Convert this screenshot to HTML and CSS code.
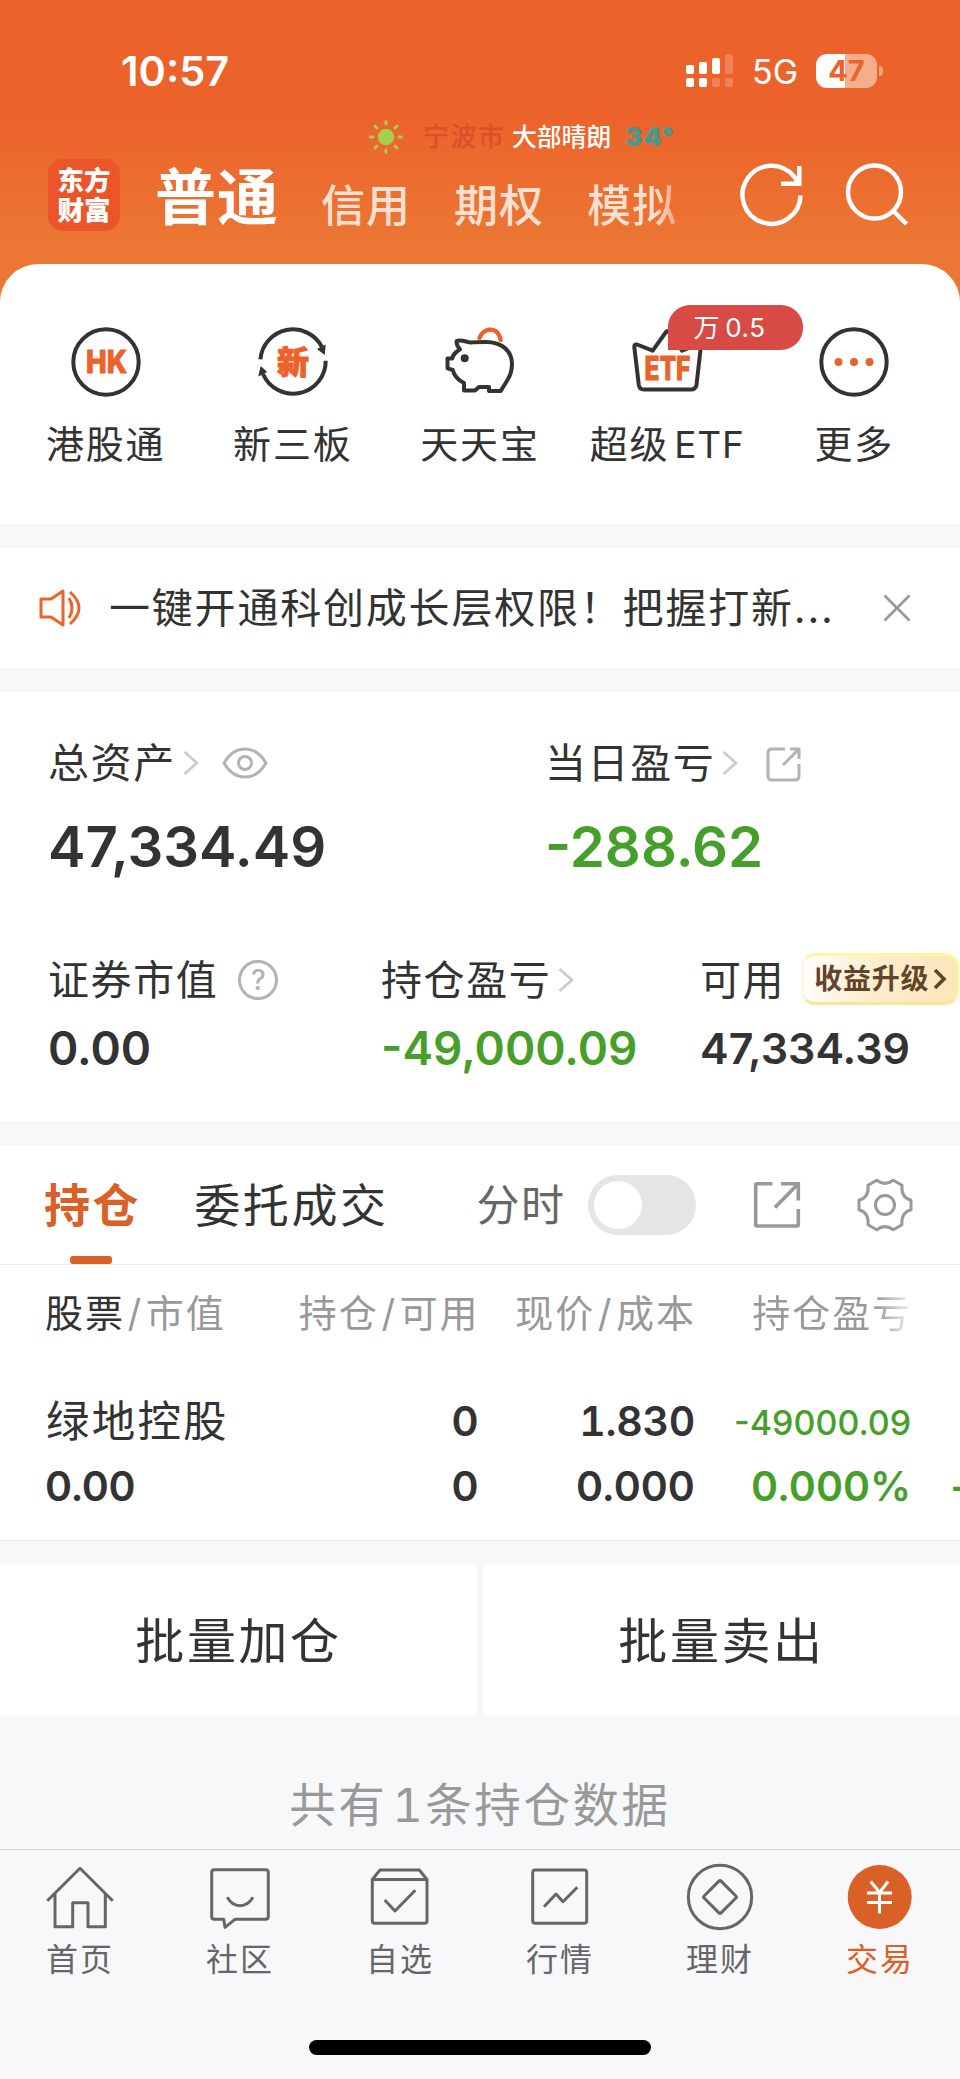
FILE: index.html
```html
<!DOCTYPE html>
<html lang="zh-CN">
<head>
    <meta charset="UTF-8">
    <meta name="viewport" content="width=device-width, initial-scale=1.0">
    <title>交易</title>
    <link rel="stylesheet" href="styles.css">
</head>
<body>
<div class="page">
    <header class="header">
        <div class="status">
            <span class="time">10:57</span>
            <svg class="signal" width="48" height="34" viewBox="0 0 48 34" fill="#fff">
                <rect x="0" y="11" width="8" height="9" rx="2"/>
                <rect x="13" y="8" width="8" height="12" rx="2"/>
                <rect x="26" y="4" width="8" height="16" rx="2"/>
                <rect x="39" y="0" width="8" height="20" rx="2" opacity=".2"/>
                <rect x="0" y="24" width="8" height="9" rx="2"/>
                <rect x="13" y="24" width="8" height="9" rx="2"/>
                <rect x="26" y="24" width="8" height="9" rx="2" opacity=".2"/>
                <rect x="39" y="24" width="8" height="9" rx="2" opacity=".2"/>
            </svg>
            <span class="network">5G</span>
            <span class="battery">47</span>
            <i class="battery-cap"></i>
        </div>
        <div class="weather">
            <svg width="36" height="36" viewBox="-18 -18 36 36" stroke="#a5cd4f" stroke-width="3" stroke-linecap="round">
                <circle r="8.2" fill="#a5cd4f" stroke="none"/>
                <path d="M0-15.500V-13M0 15.500V13M-15.500 0H-13M15.500 0H13M-11-11L-9-9M11-11L9-9M-11 11L-9 9M11 11L9 9"/>
            </svg>
            <span class="city">宁波市</span>
            <span class="sky">大部晴朗</span>
            <span class="degree">34°</span>
        </div>
        <div class="nav">
            <div class="logo">东方<br>财富</div>
            <span class="nav-item active">普通</span>
            <span class="nav-item">信用</span>
            <span class="nav-item">期权</span>
            <span class="nav-item last">模拟</span>
            <svg class="refresh" width="64" height="64" viewBox="0 0 64 64" fill="none" stroke="#fff" stroke-width="4.500">
                <path d="M60.500 32.500A29 29 0 1 1 54 13.500L58.500 20"/>
                <path d="M59.300 3V20.700H41"/>
            </svg>
            <svg class="search" width="64" height="64" viewBox="0 0 64 64" fill="none" stroke="#fff" stroke-width="4.500">
                <circle cx="29.500" cy="29" r="26.500"/>
                <path d="M48 47.500L61.500 61"/>
            </svg>
        </div>
    </header>

    <section class="shortcuts">
        <div class="shortcut">
            <svg class="icon" viewBox="0 0 70 70">
                <circle class="line" cx="35" cy="35" r="32.700"/>
                <text class="icon-text" x="15" y="46" font-size="31" textLength="41" lengthAdjust="spacingAndGlyphs">HK</text>
            </svg>
            <span>港股通</span>
        </div>
        <div class="shortcut">
            <svg class="icon" viewBox="0 0 70 70">
                <path class="line" d="M2.400 32.300A32.700 32.700 0 0 1 64 20M67.700 33.700A32.700 32.700 0 0 1 5 47"/>
                <path fill="#333" d="M59 22L67.700 17.500L66.700 28ZM2.700 39L.2 49.500L9.200 45Z"/>
                <text class="icon-text" x="19" y="46.500" font-size="32">新</text>
            </svg>
            <span>新三板</span>
        </div>
        <div class="shortcut">
            <svg class="icon" viewBox="0 0 70 70">
                <path class="line" d="M11.700 14C16 12 22 15.500 26 15.500C30 15 35 15 41 15C57 15 67 24 67 37C67 44 65 49 62.500 53L55.700 64H44V60H34L30 63.500H19V56C13 53 9 48 7.700 43L2.500 41.300V31.500H7.300C8 27 11 25 15 22.300Q11 18 11.700 14Z"/>
                <circle cx="19.700" cy="31.300" r="4" fill="#333"/>
                <path d="M34.500 11C39 0 53 -1 55.700 13" fill="none" stroke="#ec622b" stroke-width="4.500" stroke-linecap="round"/>
            </svg>
            <span>天天宝</span>
        </div>
        <div class="shortcut">
            <svg class="icon" viewBox="0 0 70 70">
                <path class="line" d="M5 17.500L20.700 23.700L34 5Q35.300 3 37 5L50 23.700L66 17.500Q69 17 68.800 20L64.500 58Q63.500 62.500 59 62.500H12Q7.500 62.500 6.800 58L2.300 20Q2 17 5 17.500Z"/>
                <text class="icon-text" x="12.500" y="53" font-size="32" textLength="46" lengthAdjust="spacingAndGlyphs">ETF</text>
            </svg>
            <span>超级<i class="thin-gap"></i><i class="latin">ETF</i></span>
            <em class="badge">万<i class="thin-gap"></i>0.5</em>
        </div>
        <div class="shortcut">
            <svg class="icon" viewBox="0 0 70 70">
                <circle class="line" cx="35" cy="35" r="32.700"/>
                <g fill="#ec622b">
                    <circle cx="19.500" cy="35" r="4"/>
                    <circle cx="35" cy="35" r="4"/>
                    <circle cx="50.500" cy="35" r="4"/>
                </g>
            </svg>
            <span>更多</span>
        </div>
    </section>

    <section class="notice">
        <svg width="44" height="38" viewBox="0 0 44 38" fill="none" stroke="#ec622b" stroke-width="3">
            <path d="M2 10H12L24 2V36L12 28H2Z" stroke-linejoin="round"/>
            <path d="M30 9Q36 19 30 29M31 3Q49 19 31 35"/>
        </svg>
        <p>一键开通科创成长层权限！把握打新...</p>
        <svg width="28" height="28" viewBox="0 0 28 28" stroke="#999" stroke-width="2.800">
            <path d="M1.500 1.500L26.500 26.500M26.500 1.500L1.500 26.500"/>
        </svg>
    </section>

    <section class="assets">
        <div class="assets-top">
            <div>
                <div class="label">总资产
                    <svg class="arrow" viewBox="0 0 16 26"><path d="M1.500 2L14 13L1.500 24"/></svg>
                    <svg class="eye" width="46" height="32" viewBox="0 0 46 32" fill="none" stroke="#b3b3b3" stroke-width="3">
                        <path d="M2 16Q10 2 23 2T44 16Q36 30 23 30T2 16Z" stroke-linejoin="round"/>
                        <circle cx="23" cy="16" r="6.500"/>
                    </svg>
                </div>
                <div class="total">47,334.49</div>
            </div>
            <div>
                <div class="label">当日盈亏
                    <svg class="arrow" viewBox="0 0 16 26"><path d="M1.500 2L14 13L1.500 24"/></svg>
                    <svg class="share" width="36" height="36" viewBox="0 0 36 36" fill="none" stroke="#b3b3b3" stroke-width="3">
                        <path d="M19 2H6Q2 2 2 6V29Q2 33 6 33H29Q33 33 33 29V17"/>
                        <path d="M24 2H33V12M33 2L17 18"/>
                    </svg>
                </div>
                <div class="total green day">-288.62</div>
            </div>
        </div>
        <div class="assets-bottom">
            <div>
                <div class="label">证券市值
                    <span class="help">?</span>
                </div>
                <div class="value">0.00</div>
            </div>
            <div>
                <div class="label">持仓盈亏
                    <svg class="arrow" viewBox="0 0 16 26"><path d="M1.500 2L14 13L1.500 24"/></svg>
                </div>
                <div class="value green">-49,000.09</div>
            </div>
            <div>
                <div class="label">可用
                    <span class="upgrade">收益升级<svg width="14" height="22" viewBox="0 0 14 22" fill="none" stroke="#634329" stroke-width="3.600"><path d="M2 2L11 11L2 20"/></svg></span>
                </div>
                <div class="value small">47,334.39</div>
            </div>
        </div>
    </section>

    <section class="positions">
        <div class="tabs">
            <span class="tab on">持仓</span>
            <span class="tab">委托成交</span>
            <span class="switch-label">分时</span>
            <i class="switch"></i>
            <svg class="export" width="48" height="48" viewBox="0 0 48 48" fill="none" stroke="#999" stroke-width="3.600">
                <path d="M19.500 2.700H4Q2.700 2.700 2.700 4V43.500Q2.700 45 4 45H44Q45.300 45 45.300 43.500V28"/>
                <path d="M28 2.700H45.300V19.500M45 3L22 26.500"/>
            </svg>
            <svg class="gear" width="56" height="56" viewBox="0 0 56 56" fill="none" stroke="#999" stroke-width="3" stroke-linejoin="round">
                <path d="M19.700 3.200Q28 9.500 36.300 3.200L45 8.300C44 17 48 21.500 54 23.300V32.700C48 34.500 44 39 45 47.700L36.300 52.800Q28 46.500 19.700 52.800L11 47.700C12 39 8 34.500 2 32.700V23.300C8 21.500 12 17 11 8.300Z"/>
                <circle cx="28" cy="28" r="9.500"/>
            </svg>
        </div>
        <div class="row head">
            <span><b>股票</b><i>/</i>市值</span>
            <span>持仓<i>/</i>可用</span>
            <span>现价<i>/</i>成本</span>
            <span class="fade">持仓盈亏</span>
        </div>
        <div class="row first">
            <span class="name">绿地控股</span>
            <span>0</span>
            <span class="price">1.830</span>
            <span class="green profit">-49000.09</span>
        </div>
        <div class="row second">
            <span class="worth">0.00</span>
            <span>0</span>
            <span>0.000</span>
            <span class="green">0.000%</span>
            <span class="green more">-</span>
        </div>
    </section>

    <div class="actions">
        <div class="action">批量加仓</div>
        <div class="action">批量卖出</div>
    </div>
    <p class="count">共有<i class="thin-gap"></i>1条持仓数据</p>

    <nav class="tabbar">
        <div class="tabbar-item">
            <svg viewBox="0 0 70 70"><path d="M2.300 38.700L35 6.300L67.700 38.700M10 31.500V64.700H27.700V40.700H43V64.700H60.300V31.500"/></svg>
            <span>首页</span>
        </div>
        <div class="tabbar-item">
            <svg viewBox="0 0 70 70"><path d="M18.700 57.300H9.500Q6.700 57.300 6.700 54.500V10.500Q6.700 7.700 9.500 7.700H60.500Q63.300 7.700 63.300 10.500V54.500Q63.300 57.300 60.500 57.300H30L20 65.300ZM22.300 35.300Q27 43.700 35 43.700T48 35.300"/></svg>
            <span>社区</span>
        </div>
        <div class="tabbar-item">
            <svg viewBox="0 0 70 70"><path d="M7.300 17.500L15 8H54.300L62 17.500ZM7.300 17.500V58.500Q7.300 61.300 10 61.300H59.500Q62 61.300 62 58.500V17.500M19.700 38L30 49L50.300 28.300"/></svg>
            <span>自选</span>
        </div>
        <div class="tabbar-item">
            <svg viewBox="0 0 70 70"><rect x="7.700" y="8" width="54" height="53.300" rx="2.500"/><path d="M19 44.700L31 32L38 39.700L52.300 25.300"/></svg>
            <span>行情</span>
        </div>
        <div class="tabbar-item">
            <svg viewBox="0 0 70 70"><circle cx="35" cy="35" r="31.700"/><rect x="23" y="23" width="24" height="24" rx="1.500" transform="rotate(45 35 35)"/></svg>
            <span>理财</span>
        </div>
        <div class="tabbar-item current">
            <svg viewBox="0 0 70 70"><circle cx="34.700" cy="35" r="32" fill="#d96027" stroke="none"/><path stroke="#fff" d="M25.700 19.500L34.700 30.500L43 19.500M22 31H47M22 40.500H47M34.500 30V51.500"/></svg>
            <span>交易</span>
        </div>
    </nav>
    <div class="home-bar"><i></i></div>
</div>
</body>
</html>
```

FILE: styles.css
```css
*{
    box-sizing: border-box;
}
body{
    margin: 0;
    font-family: Inter, "Noto Sans CJK SC", sans-serif;
    color: #333;
    background: #f7f8fa;
}
p{
    margin: 0;
}
i, em{
    font-style: normal;
}
svg{
    display: block;
    flex: none;
}
.page{
    width: 960px;
    height: 2079px;
    overflow: hidden;
    display: flex;
    flex-direction: column;
}
.green{
    color: #479f2b;
}
.thin-gap{
    display: inline-block;
    width: 5px;
}

/* 顶部 */
.header{
    height: 314px;
    flex: none;
    color: #fff;
    background: linear-gradient(#ec622b 112px, #ec7633 240px);
}
.status{
    display: flex;
    align-items: center;
    height: 102px;
    padding: 40px 77px 0 121px;
}
.time{
    width: 565px;
    font-size: 41.5px;
    font-weight: 600;
}
.signal{
    width: 48px;
}
.network{
    width: 64px;
    margin-left: 18px;
    font-size: 34px;
    line-height: 34px;
    padding-top: 2px;
}
.battery{
    width: 61px;
    height: 34px;
    border-radius: 11px;
    background: linear-gradient(90deg, #fff 47%, #f4ae89 47%);
    color: #ec622b;
    font-size: 29px;
    font-weight: 700;
    line-height: 34px;
    text-align: center;
}
.battery-cap{
    width: 4px;
    height: 10px;
    margin-left: 2px;
    border-radius: 0 4px 4px 0;
    background: #f2a079;
}
.weather{
    display: flex;
    align-items: center;
    height: 36px;
    margin-top: 17px;
    padding-left: 368px;
    line-height: 36px;
}
.city{
    width: 89px;
    margin-left: 19px;
    font-size: 26px;
    font-weight: 500;
    letter-spacing: 1.5px;
    color: #d9502b;
}
.sky{
    width: 113px;
    font-size: 24.8px;
    font-weight: 500;
}
.degree{
    font-size: 26px;
    font-weight: 900;
    letter-spacing: 1.2px;
    color: #46998d;
}
.nav{
    display: flex;
    align-items: center;
    height: 80px;
    padding-left: 48px;
    white-space: nowrap;
}
.logo{
    width: 72px;
    height: 72px;
    margin-right: 35px;
    padding-top: 6px;
    border-radius: 15px;
    background: #eb5529;
    font-size: 26.5px;
    font-weight: 900;
    line-height: 30px;
    text-align: center;
}
.nav-item{
    width: 133px;
    padding-top: 22px;
    font-size: 44px;
    font-weight: 500;
    letter-spacing: 1px;
    line-height: 60px;
    color: #fbe0d2;
}
.nav-item.active{
    width: 166px;
    padding-top: 6px;
    font-size: 61px;
    font-weight: 700;
    color: #fff;
}
.nav-item.last{
    width: 90px;
    color: transparent;
    background: linear-gradient(90deg, #fbe0d2 75%, #f2a57a);
    -webkit-background-clip: text;
    background-clip: text;
}
.refresh{
    margin-left: 63px;
}
.search{
    margin-left: 41px;
}

/* 快捷入口 */
.shortcuts{
    display: grid;
    grid-template-columns: repeat(5, 187.2px);
    justify-content: center;
    flex: none;
    height: 260px;
    margin-top: -50px;
    padding-top: 63px;
    border-radius: 38px 38px 0 0;
    background: #fff;
}
.shortcut{
    position: relative;
    display: flex;
    flex-direction: column;
    align-items: center;
    gap: 22px;
    font-size: 38px;
    letter-spacing: 1.8px;
    line-height: 50px;
    white-space: nowrap;
}
.latin{
    font-size: 37px;
    letter-spacing: .8px;
}
.icon{
    width: 70px;
    height: 70px;
    overflow: visible;
}
.line{
    fill: none;
    stroke: #333;
    stroke-width: 4;
    stroke-linejoin: round;
}
.icon-text{
    fill: #ec622b;
    stroke: #ec622b;
    stroke-width: 1;
    stroke-linejoin: round;
    font-weight: 800;
    letter-spacing: 0;
}
.badge{
    position: absolute;
    left: 94px;
    top: -22px;
    width: 135px;
    height: 45px;
    padding-left: 26px;
    border-radius: 22px 22px 22px 0;
    background: #d84a44;
    color: #fff;
    font-size: 26px;
    letter-spacing: .6px;
    line-height: 45px;
}

/* 公告 */
.notice{
    display: flex;
    align-items: center;
    flex: none;
    height: 120px;
    margin-top: 24px;
    padding: 0 49px 0 39px;
    background: #fff;
}
.notice p{
    flex: 1;
    margin-left: 26px;
    font-size: 41px;
    letter-spacing: 1.8px;
    line-height: 50px;
    white-space: nowrap;
}

/* 资产 */
.assets{
    flex: none;
    height: 429px;
    margin-top: 24px;
    padding: 46px 0 0 48px;
    background: #fff;
}
.assets-top{
    display: grid;
    grid-template-columns: 497px 1fr;
    height: 217px;
}
.assets-bottom{
    display: grid;
    grid-template-columns: 333px 319px 1fr;
}
.label{
    display: flex;
    align-items: center;
    height: 50px;
    font-size: 41px;
    letter-spacing: 1.6px;
    line-height: 50px;
    white-space: nowrap;
}
.arrow{
    width: 16px;
    height: 26px;
    margin-left: 7px;
    fill: none;
    stroke: #ccc;
    stroke-width: 2.8;
}
.eye{
    margin-left: 23px;
}
.share{
    margin-left: 28px;
    margin-top: 3px;
}
.help{
    width: 40px;
    height: 40px;
    margin-left: 20px;
    border: 3px solid #b3b3b3;
    border-radius: 50%;
    color: #b3b3b3;
    font-size: 28px;
    font-weight: 500;
    letter-spacing: 0;
    line-height: 34px;
    text-align: center;
}
.total{
    margin-top: 24px;
    font-size: 56.3px;
    font-weight: 600;
    line-height: 70px;
}
.value{
    margin-top: 13px;
    font-size: 46px;
    font-weight: 600;
    line-height: 60px;
}
.value.small{
    font-size: 43px;
}
.upgrade{
    display: flex;
    align-items: center;
    gap: 4px;
    width: 158px;
    height: 52px;
    margin-left: 16px;
    margin-top: -2px;
    padding-left: 10px;
    border: 3px solid;
    border-color: #fef6a0 #fdf2a0 #fce39a #fef6e4;
    border-radius: 14px;
    background: linear-gradient(100deg, #fff, #fcefd0 40%, #fbe5b8);
    color: #634329;
    font-size: 28px;
    font-weight: 700;
    letter-spacing: .8px;
    line-height: 46px;
}

/* 持仓 */
.positions{
    flex: none;
    height: 396px;
    margin-top: 24px;
    border-bottom: 1px solid #e8e9ec;
    background: #fff;
}
.tabs{
    display: flex;
    align-items: center;
    height: 120px;
    padding-left: 44px;
    border-bottom: 1px solid #ebebeb;
    white-space: nowrap;
}
.tab{
    height: 119px;
    margin-right: 53px;
    font-size: 46px;
    letter-spacing: 2.600px;
    line-height: 120px;
}
.tab.on{
    position: relative;
    color: #d96027;
    font-weight: 700;
}
.tab.on::after{
    content: "";
    position: absolute;
    left: 26px;
    bottom: 0;
    width: 42px;
    height: 8px;
    border-radius: 3px;
    background: #d96027;
}
.switch-label{
    margin-left: 35px;
    font-size: 43px;
    letter-spacing: 1.5px;
    line-height: 60px;
    color: #666;
}
.switch{
    width: 108px;
    height: 60px;
    margin-left: 22px;
    padding: 6px;
    border-radius: 30px;
    background: #e5e5e7;
}
.switch::before{
    content: "";
    display: block;
    width: 48px;
    height: 48px;
    border-radius: 50%;
    background: #fff;
}
.export{
    margin-left: 57px;
}
.gear{
    margin-left: 56px;
}
.row{
    display: grid;
    grid-template-columns: repeat(4, 216.3px) 49px;
    padding-left: 46px;
    height: 65px;
    font-size: 41px;
    font-weight: 600;
    line-height: 65px;
    text-align: right;
    white-space: nowrap;
}
.row span:first-child{
    text-align: left;
}
.head{
    height: 98px;
    padding-left: 45px;
    font-size: 38px;
    font-weight: 400;
    letter-spacing: 2px;
    line-height: 97px;
    color: #999;
}
.head b{
    color: #333;
    font-weight: 400;
}
.head i{
    margin: 0 2.5px;
}
.head span{
    margin-right: -2px;
}
.head .fade{
    color: transparent;
    background: linear-gradient(90deg, #999 83%, #e8e8e8 98%);
    -webkit-background-clip: text;
    background-clip: text;
}
.first{
    margin-top: 26px;
}
.row .name{
    font-size: 43.5px;
    font-weight: 400;
    letter-spacing: 2.200px;
}
.row .price{
    font-variant-numeric: tabular-nums;
    letter-spacing: -.3px;
}
.row .worth{
    margin-left: -1px;
    letter-spacing: -.5px;
}
.row .profit{
    font-size: 34px;
    font-weight: 500;
    line-height: 67px;
}
.row .more{
    overflow: hidden;
    padding-left: 39px;
    text-align: left;
}

/* 批量操作 */
.actions{
    display: grid;
    grid-template-columns: 1fr 1fr;
    gap: 6px;
    flex: none;
    height: 150px;
    margin-top: 24px;
}
.action{
    height: 150px;
    background: #fff;
    font-size: 49px;
    letter-spacing: 2.600px;
    line-height: 153px;
    text-align: center;
}
.count{
    flex: none;
    height: 134px;
    padding-top: 60px;
    font-size: 46.5px;
    font-variant-numeric: tabular-nums;
    letter-spacing: 2.600px;
    line-height: 60px;
    text-align: center;
    color: #999;
}

/* 底部导航 */
.tabbar{
    display: grid;
    grid-template-columns: repeat(6, 1fr);
    flex: none;
    height: 191px;
    padding-top: 12px;
    border-top: 1px solid #d3d5d8;
    background: #f8f8fa;
}
.tabbar-item{
    display: flex;
    flex-direction: column;
    align-items: center;
    gap: 8px;
    font-size: 32px;
    letter-spacing: 2px;
    line-height: 40px;
    color: #666;
}
.tabbar-item svg{
    width: 70px;
    height: 70px;
    fill: none;
    stroke: #666;
    stroke-width: 3;
    stroke-linejoin: round;
}
.tabbar-item.current{
    color: #d96027;
}
.home-bar{
    flex: 1;
    background: #f8f8fa;
}
.home-bar i{
    display: block;
    width: 342px;
    height: 15px;
    margin: 0 auto;
    border-radius: 8px;
    background: #000;
}
```
